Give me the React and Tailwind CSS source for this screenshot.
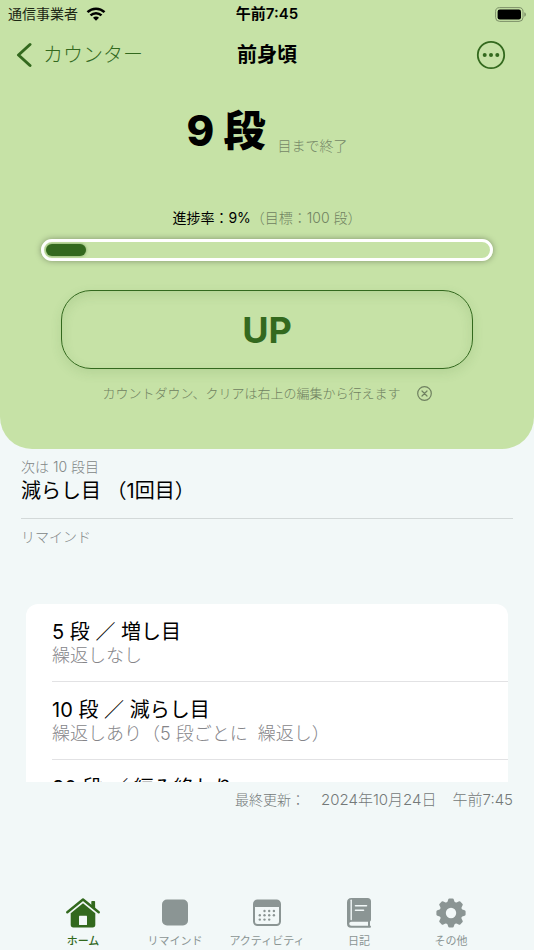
const rows = [
  { title: '5 段 ／ 増し目', note: '繰返しなし' },
  { title: '10 段 ／ 減らし目', note: '繰返しあり（5 段ごとに\u00a0 繰返し）' },
  { title: '30 段 ／ 編み終わり' },
];

const tabs = [
  { label: 'ホーム', icon: HomeIcon, active: true },
  { label: 'リマインド', icon: SquareIcon },
  { label: 'アクティビティ', icon: CalendarIcon },
  { label: '日記', icon: BookIcon },
  { label: 'その他', icon: GearIcon },
];

function HomeIcon() {
  return (
    <svg width="34" height="30" viewBox="0 0 34 30" fill="currentColor" aria-hidden="true">
      <path d="M1.3 14.3 17 1.5l15.700 12.800" fill="none" stroke="currentColor" strokeWidth="2.400" strokeLinecap="round" strokeLinejoin="round" />
      <path d="M25.300 3.700q0-.8.8-.8h2.200q.8 0 .8.8v7.300l-3.800-3z" />
      <path d="M17 5.200 29.300 15.200V26.800q0 2.700-2.700 2.700H7.400q-2.700 0-2.700-2.700V15.200z" />
      <rect x="13" y="17.800" width="8" height="9.200" rx=".5" fill="#f2f8f8" />
    </svg>
  );
}

function SquareIcon() {
  return (
    <svg width="26" height="30" viewBox="0 0 26 30" fill="currentColor" aria-hidden="true">
      <rect x="0" y="1.500" width="26" height="26" rx="5" />
    </svg>
  );
}

function CalendarIcon() {
  const dots = [[11.500, 13], [16.200, 13], [20.900, 13], [6.800, 17.300], [11.500, 17.300], [16.200, 17.300], [20.900, 17.300], [6.800, 21.600], [11.500, 21.600], [16.200, 21.600]];
  return (
    <svg width="28" height="30" viewBox="0 0 28 30" fill="currentColor" aria-hidden="true">
      <rect x="1" y="2.500" width="26" height="24.500" rx="3.500" fill="none" stroke="currentColor" strokeWidth="2" />
      <path d="M1 5.500q0-3 3-3h20q3 0 3 3v3.500H1z" />
      {dots.map(([x, y]) => (
        <circle key={`${x}-${y}`} cx={x} cy={y} r="1.200" />
      ))}
    </svg>
  );
}

function BookIcon() {
  return (
    <svg width="24" height="30" viewBox="0 0 24 30" fill="none" aria-hidden="true">
      <path d="M4.500 0h16Q24 0 24 3.500v18q0 1.500-1 1.900v4.200q1 .2 1 1.100t-1 1.100H4Q0 29.800 0 25.500v-21Q0 0 4.500 0z" fill="currentColor" />
      <path d="M4.200 2.200v19.300" stroke="#f2f8f8" strokeWidth="1.400" strokeLinecap="round" />
      <path d="M8.500 7.800h11M8.500 12.200h8" stroke="#f2f8f8" strokeWidth="1.600" strokeLinecap="round" />
      <path d="M4.500 23.700H21v4H4.500q-2.300 0-2.300-2t2.300-2z" fill="#f2f8f8" />
    </svg>
  );
}

function GearIcon() {
  return (
    <svg width="30" height="30" viewBox="0 0 30 30" fill="currentColor" aria-hidden="true">
      {[0, 45, 90, 135].map((angle) => (
        <path
          key={angle}
          d="M13.500.4h3q1.100 0 1.300 1L19.500 6.500v17l-1.700 5.100q-.2 1-1.300 1h-3q-1.100 0-1.300-1L10.500 23.500v-17l1.700-5.100q.2-1 1.300-1z"
          transform={`rotate(${angle} 15 15)`}
        />
      ))}
      <circle cx="15" cy="15" r="11.500" />
      <circle cx="15" cy="15" r="5.200" fill="#f2f8f8" />
    </svg>
  );
}

function StatusBar() {
  return (
    <div className="grid h-7 grid-cols-3 items-center px-2">
      <div className="flex items-center gap-2 text-sm text-[#1c2614]">
        通信事業者
        <svg width="20" height="14" viewBox="0 0 19 14" fill="none" stroke="#000" strokeWidth="2.500" aria-hidden="true">
          <path d="M1 5.100a12.200 12.200 0 0 1 17 0" />
          <path d="M4 8.400a8 8 0 0 1 11 0" />
          <path d="M9.500 13.800 6.500 10.800a4.200 4.200 0 0 1 6 0z" fill="#000" stroke="none" />
        </svg>
      </div>
      <div className="text-center text-[15px] font-semibold text-black">午前7:45</div>
      <svg className="justify-self-end" width="32" height="15" viewBox="0 0 32 15" aria-hidden="true">
        <rect x="1.600" y=".6" width="27.400" height="13.800" rx="4" fill="none" stroke="#7d9068" />
        <rect x="3.600" y="2.600" width="23.400" height="9.800" rx="2.200" />
        <path d="M30.300 5.200q1.600.5 1.600 2.300t-1.600 2.300z" fill="#7d9068" />
      </svg>
    </div>
  );
}

function NavBar() {
  return (
    <header className="grid h-[54px] grid-cols-3 items-center pr-7 pl-4 text-[#33691e]">
      <a href="#counters" className="flex items-center gap-[11px] text-xl font-light">
        <svg width="16" height="26" viewBox="0 0 16 26" fill="none" stroke="currentColor" strokeWidth="3" strokeLinecap="round" strokeLinejoin="round" aria-hidden="true">
          <path d="M14 2.500 2.500 13 14 23.500" />
        </svg>
        カウンター
      </a>
      <h1 className="pl-3 text-center text-xl font-semibold text-black">前身頃</h1>
      <button type="button" aria-label="編集" className="justify-self-end">
        <svg width="30" height="30" viewBox="0 0 30 30" fill="none" stroke="currentColor" strokeWidth="1.800" aria-hidden="true">
          <circle cx="15" cy="15" r="13.200" />
          <g fill="currentColor" stroke="none">
            <circle cx="8.700" cy="15" r="2" />
            <circle cx="15" cy="15" r="2" />
            <circle cx="21.300" cy="15" r="2" />
          </g>
        </svg>
      </button>
    </header>
  );
}

function CounterPanel() {
  const current = 9;
  const goal = 100;

  return (
    <section className="rounded-b-[32px] bg-[#c6e2a6] pb-[46px]">
      <StatusBar />
      <NavBar />
      <div className="flex items-end justify-center gap-3 pt-4">
        <p className="text-[42px] leading-[66px] font-extrabold text-black">{current} 段</p>
        <p className="pb-2 text-sm leading-5 font-light text-[#758766]">目まで終了</p>
      </div>
      <p className="pt-[43px] text-center text-sm leading-[22px] text-black">
        進捗率：{current}%<span className="font-light text-[#6f8160]">（目標：{goal} 段）</span>
      </p>
      <div className="mx-[41px] mt-[10px] h-[22px] rounded-full border-[3px] border-white p-[2px] shadow-[0_0_6px_rgba(0,0,0,0.35)]">
        <div className="h-full rounded-full bg-[#33691e] shadow-[0_0_3px_rgba(51,105,30,0.6)]" style={{ width: `${(current / goal) * 100}%` }} />
      </div>
      <div className="mx-[61px] mt-[29px]">
        <button type="button" className="h-[79px] w-full rounded-[30px] border border-[#33691e] text-4xl font-bold text-[#33691e] shadow-[0_4px_12px_rgba(51,105,30,0.12),inset_0_4px_12px_rgba(51,105,30,0.12)]">
          UP
        </button>
      </div>
      <div className="mt-[14px] flex items-center justify-center gap-4 text-[13px] leading-5 font-light text-[#6f8160]">
        <p>カウントダウン、クリアは右上の編集から行えます</p>
        <button type="button" aria-label="閉じる">
          <svg width="15" height="15" viewBox="0 0 15 15" fill="none" stroke="currentColor" strokeWidth="1.200" strokeLinecap="round" aria-hidden="true">
            <circle cx="7.500" cy="7.500" r="6.800" />
            <path d="m5 5 5 5M10 5l-5 5" />
          </svg>
        </button>
      </div>
    </section>
  );
}

function RemindList() {
  return (
    <ul className="mx-[26px] mt-[57px] h-[178px] overflow-hidden rounded-t-xl bg-white pl-[26px]">
      {rows.map((row) => (
        <li key={row.title} className="h-[78px] border-b border-[#e2e2e4] pt-4">
          <p className="text-xl leading-6 text-black">{row.title}</p>
          {row.note && <p className="text-lg leading-6 font-light text-[#858589]">{row.note}</p>}
        </li>
      ))}
    </ul>
  );
}

function TabBar() {
  return (
    <nav className="mt-auto flex px-[37px]">
      {tabs.map(({ label, icon: Icon, active }) => (
        <a
          key={label}
          href="#tab"
          aria-current={active ? 'page' : undefined}
          className={`flex flex-1 flex-col items-center gap-1 text-[11px] leading-[18px] whitespace-nowrap ${active ? 'font-medium text-[#33691e]' : 'text-[#8b9594]'}`}
        >
          <Icon />
          {label}
        </a>
      ))}
    </nav>
  );
}

export default function App() {
  return (
    <div className="flex min-h-screen flex-col bg-[#f2f8f8] font-['Inter','Noto_Sans_CJK_JP',sans-serif]">
      <CounterPanel />
      <main>
        <section className="mx-[21px] border-b border-[#d3d9d9] pt-2 pb-[13px]">
          <p className="text-sm leading-5 font-light text-[#818686]">次は 10 段目</p>
          <h2 className="text-xl leading-7 text-black">減らし目 （1回目）</h2>
        </section>
        <h3 className="mx-[21px] mt-2 text-sm leading-5 font-light text-[#818686]">リマインド</h3>
        <RemindList />
        <p className="mt-2 flex items-baseline justify-end px-[21px] text-sm leading-5 font-light text-[#747979]">
          最終更新：
          <span className="ml-4 text-[15px]">2024年10月24日</span>
          <span className="ml-4 text-[15px]">午前7:45</span>
        </p>
      </main>
      <TabBar />
    </div>
  );
}
